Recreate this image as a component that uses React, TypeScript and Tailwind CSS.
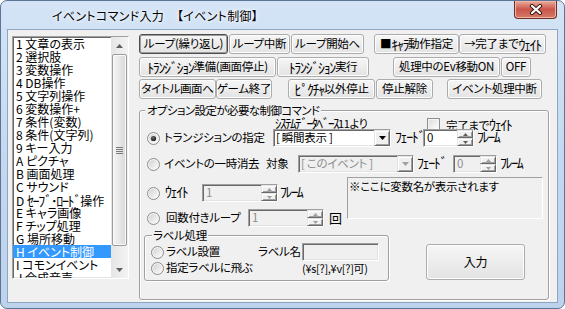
import React from "react";

const font =
  "font-['Noto_Sans_CJK_JP','Noto_Sans_CJK_SC',sans-serif] [font-feature-settings:'palt']";

function H({ children, small }: { children: React.ReactNode; small?: boolean }) {
  return (
    <span
      className={`${
        small ? "text-[13px] tracking-[-1.5px]" : "text-[14px] tracking-[-1.4px]"
      } leading-none [font-feature-settings:normal]`}
    >
      {children}
    </span>
  );
}

const sunken =
  "border border-t-[#a0a0a0] border-l-[#a0a0a0] border-b-white border-r-white shadow-[inset_1px_1px_0_#696969,inset_-1px_-1px_0_#e3e3e3]";
const raised =
  "border border-t-[#e3e3e3] border-l-[#e3e3e3] border-b-[#696969] border-r-[#696969] shadow-[inset_1px_1px_0_#ffffff,inset_-1px_-1px_0_#a0a0a0] bg-[#f0f0f0]";
const btn =
  "flex items-center justify-center whitespace-nowrap rounded-[3px] border bg-linear-to-b from-[#f6f6f6] to-[#e3e3e3] leading-none shrink-0";
const btnNormal = "border-[#acacac] shadow-[inset_0_0_0_1px_#fdfdfd]";
const btnDefault = "border-[#4d4d4d] shadow-[inset_0_0_0_1px_#9c9c9c]";

const items: React.ReactNode[] = [
  "1 文章の表示",
  "2 選択肢",
  "3 変数操作",
  "4 DB操作",
  "5 文字列操作",
  "6 変数操作+",
  "7 条件(変数)",
  "8 条件(文字列)",
  "9 キー入力",
  "A ピクチャ",
  "B 画面処理",
  "C サウンド",
  <>
    D <H>ｾｰﾌﾞ･ﾛｰﾄﾞ</H>操作
  </>,
  "E キャラ画像",
  "F チップ処理",
  "G 場所移動",
  "H イベント制御",
  "I コモンイベント",
  "J 合成音声",
];

function Radio({ checked, className = "" }: { checked?: boolean; className?: string }) {
  return (
    <svg width="13" height="13" viewBox="0 0 13 13" className={`shrink-0 ${className}`}>
      <defs>
        <linearGradient id="rg" x1="0" y1="0" x2="1" y2="1">
          <stop offset="0" stopColor="#d2d2d2" />
          <stop offset="1" stopColor="#fbfbfb" />
        </linearGradient>
        <radialGradient id="rd" cx="0.4" cy="0.35" r="0.7">
          <stop offset="0" stopColor="#6b6b6b" />
          <stop offset="1" stopColor="#141414" />
        </radialGradient>
      </defs>
      <circle cx="6.5" cy="6.5" r="6" fill="#f6f6f6" stroke="#8b8b8b" />
      <circle cx="6.5" cy="6.5" r="4.6" fill="url(#rg)" />
      {checked && <circle cx="6.5" cy="6.5" r="2.6" fill="url(#rd)" />}
    </svg>
  );
}

function Checkbox({ className = "" }: { className?: string }) {
  return (
    <div
      className={`shrink-0 w-[13px] h-[13px] border border-[#8e8f8f] bg-linear-to-br from-[#dcdcdc] to-white shadow-[inset_0_0_0_1px_#f4f4f4] ${className}`}
    />
  );
}

function DownArrow({ color = "#000" }: { color?: string }) {
  return (
    <svg width="7" height="4" viewBox="0 0 7 4">
      <path d="M0 0 H7 L3.5 4 Z" fill={color} />
    </svg>
  );
}

function Combo({
  w,
  text,
  disabled,
}: {
  w: string;
  text: string;
  disabled?: boolean;
}) {
  return (
    <div
      className={`${sunken} ${w} flex h-[18px] shrink-0 ${
        disabled ? "bg-[#f0f0f0] text-[#8d8d8d]" : "bg-white text-black"
      }`}
    >
      <div className="flex-1 pl-[2px] flex items-center whitespace-nowrap overflow-hidden leading-none">
        {text}
      </div>
      <div className={`${raised} w-[16px] h-full flex items-center justify-center`}>
        <DownArrow color={disabled ? "#a0a0a0" : "#000"} />
      </div>
    </div>
  );
}

function Spin({ w, val, disabled }: { w: string; val: string; disabled?: boolean }) {
  return (
    <div
      className={`${sunken} ${w} flex h-[18px] shrink-0 ${
        disabled ? "bg-[#f0f0f0] text-[#8d8d8d]" : "bg-white text-black"
      }`}
    >
      <div className="flex-1 pl-[3px] flex items-center leading-none">{val}</div>
      <div className="w-[16px] h-full flex flex-col">
        <div className={`${raised} flex-1 flex items-center justify-center`}>
          <svg width="5" height="3" viewBox="0 0 5 3">
            <path d="M0 3 H5 L2.5 0 Z" fill={disabled ? "#a0a0a0" : "#606060"} />
          </svg>
        </div>
        <div className={`${raised} flex-1 flex items-center justify-center`}>
          <svg width="5" height="3" viewBox="0 0 5 3">
            <path d="M0 0 H5 L2.5 3 Z" fill={disabled ? "#a0a0a0" : "#606060"} />
          </svg>
        </div>
      </div>
    </div>
  );
}

function Scrollbar() {
  return (
    <div className="w-[17px] h-full flex flex-col bg-linear-to-r from-[#e5e5e5] to-[#f3f3f3] shrink-0">
      <div className="h-[17px] flex items-center justify-center">
        <svg width="7" height="4" viewBox="0 0 7 4">
          <path d="M0 4 H7 L3.5 0 Z" fill="#5f5f5f" />
        </svg>
      </div>
      <div className="flex-1 px-[1px]">
        <div className="h-[192px] rounded-[2px] border border-[#9b9b9b] bg-linear-to-r from-[#f5f5f5] to-[#d9d9d9] shadow-[inset_0_0_0_1px_#fbfbfb] flex flex-col items-center justify-center gap-[1px]">
          <div className="w-[7px] h-[1px] bg-[#7a7a7a]" />
          <div className="w-[7px] h-[1px] bg-[#7a7a7a]" />
          <div className="w-[7px] h-[1px] bg-[#7a7a7a]" />
          <div className="w-[7px] h-[1px] bg-[#7a7a7a]" />
        </div>
      </div>
      <div className="h-[17px] flex items-center justify-center">
        <DownArrow color="#5f5f5f" />
      </div>
    </div>
  );
}

function Sp({ w }: { w: string }) {
  return <div className={`${w} shrink-0`} />;
}

export default function App() {
  return (
    <div className={`w-[565px] h-[309px] bg-white ${font} text-[11.5px] text-black`}>
      <div className="w-[565px] h-[309px] rounded-[7px] border border-[#5d7595] bg-linear-to-b from-[#d4e4f6] via-[#c4d9f0] to-[#bdd3eb] flex flex-col">
        {/* title bar */}
        <div className="h-[29px] flex shrink-0">
          <div className="ml-[51px] mt-[8px] h-[14px] text-[12px] leading-[14px] tracking-[0.3px] whitespace-nowrap [text-shadow:0_0_6px_#ffffff,0_0_3px_#ffffff]">
            イベントコマンド入力
            <span className="ml-[13px]">【イベント制御】</span>
          </div>
          <div className="ml-auto mr-[7px] w-[43px] h-[18px] rounded-b-[4px] border border-t-0 border-[#6e2d24] bg-linear-to-b from-[#e9ab9b] via-[#c9564a] to-[#d47a67] shadow-[inset_0_0_0_1px_#f0b6a8] flex items-center justify-center">
            <svg width="14" height="11" viewBox="0 0 14 11">
              <path d="M3 2 L11 9 M11 2 L3 9" stroke="#3b1a15" strokeWidth="4.2" strokeLinecap="round" />
              <path d="M3 2 L11 9 M11 2 L3 9" stroke="#ffffff" strokeWidth="2.2" strokeLinecap="round" />
            </svg>
          </div>
        </div>

        {/* client */}
        <div className="mx-[7px] w-[549px] h-[272px] bg-[#f0f0f0] shadow-[0_0_0_1px_#8ea6c4] flex shrink-0">
          {/* list box */}
          <div className={`${sunken} ml-[4px] mt-[6px] w-[117px] h-[243px] bg-white flex shrink-0 text-[12px]`}>
            <div className="flex-1 overflow-hidden">
              {items.map((it, i) => (
                <div
                  key={i}
                  className={`h-[13px] leading-[13px] pl-[3px] whitespace-nowrap ${
                    i === 16 ? "bg-[#3399ff] text-white" : ""
                  }`}
                >
                  {it}
                </div>
              ))}
            </div>
            <Scrollbar />
          </div>

          {/* right column */}
          <div className="ml-[10px] mt-[4px] flex flex-col tracking-[-0.3px]">
            <div className="flex h-[20px]">
              <div className={`${btn} ${btnDefault} w-[89px] h-[20px]`}>ループ(繰り返し)</div>
              <div className={`${btn} ${btnNormal} ml-[1px] w-[61px] h-[20px]`}>ループ中断</div>
              <div className={`${btn} ${btnNormal} ml-[1px] w-[73px] h-[20px]`}>ループ開始へ</div>
              <div className={`${btn} ${btnNormal} ml-[10px] w-[85px] h-[20px]`}>
                ■<H>ｷｬﾗ</H>動作指定
              </div>
              <div className={`${btn} ${btnNormal} w-[87px] h-[20px]`}>
                →完了まで<H>ｳｪｲﾄ</H>
              </div>
            </div>
            <div className="flex h-[20px] mt-[3px]">
              <div className={`${btn} ${btnNormal} w-[137px] h-[20px]`}>
                <H>ﾄﾗﾝｼﾞｼｮﾝ</H>準備(画面停止)
              </div>
              <div className={`${btn} ${btnNormal} ml-[1px] w-[92px] h-[20px]`}>
                <H>ﾄﾗﾝｼﾞｼｮﾝ</H>実行
              </div>
              <div className={`${btn} ${btnNormal} ml-[24px] w-[107px] h-[20px]`}>処理中のEv移動ON</div>
              <div className={`${btn} ${btnNormal} ml-[1px] w-[30px] h-[20px]`}>OFF</div>
            </div>
            <div className="flex h-[20px] mt-[2px]">
              <div className={`${btn} ${btnNormal} w-[77px] h-[20px]`}>タイトル画面へ</div>
              <div className={`${btn} ${btnNormal} w-[56px] h-[20px]`}>ゲーム終了</div>
              <div className={`${btn} ${btnNormal} ml-[16px] w-[87px] h-[20px]`}>
                <H>ﾋﾟｸﾁｬ</H>以外停止
              </div>
              <div className={`${btn} ${btnNormal} ml-[1px] w-[57px] h-[20px]`}>停止解除</div>
              <div className={`${btn} ${btnNormal} ml-[14px] w-[95px] h-[20px]`}>イベント処理中断</div>
            </div>

            {/* option group */}
            <fieldset className="mt-[5px] w-[410px] h-[196px] border border-[#a0a0a0] rounded-[3px] shadow-[inset_1px_1px_0_#ffffff,1px_1px_0_#ffffff]">
              <legend className="ml-[5px] px-[2px] leading-[13px] bg-[#f0f0f0] tracking-[-0.6px]">
                オプション設定が必要な制御コマンド
              </legend>
              <div className="flex flex-col w-[408px]">
                <div className="flex h-[12px] items-start">
                  <Sp w="w-[135px]" />
                  <div className="w-[152px] h-[12px] shrink-0 text-[11px] leading-[12px] whitespace-nowrap flex items-end">
                    <H small>ｼｽﾃﾑﾃﾞｰﾀﾍﾞｰｽ</H>
                    <span>11より</span>
                  </div>
                  <Checkbox className="mt-[1px]" />
                  <Sp w="w-[6px]" />
                  <div className="leading-[14px] whitespace-nowrap shrink-0">
                    完了まで<H>ｳｪｲﾄ</H>
                  </div>
                </div>
                <div className="flex h-[18px] items-center">
                  <Radio checked className="ml-[7px]" />
                  <div className="ml-[4px] w-[109px] shrink-0 whitespace-nowrap">トランジションの指定</div>
                  <Combo w="w-[118px]" text="[ 瞬間表示 ]" />
                  <div className="ml-[4px] w-[28px] shrink-0 whitespace-nowrap"><H>ﾌｪｰﾄﾞ</H></div>
                  <Spin w="w-[51px]" val="0" />
                  <div className="ml-[3px] shrink-0 whitespace-nowrap"><H>ﾌﾚｰﾑ</H></div>
                </div>
                <div className="mt-[8px] flex h-[18px] items-center">
                  <Radio className="ml-[7px]" />
                  <div className="ml-[4px] w-[102px] shrink-0 whitespace-nowrap">イベントの一時消去</div>
                  <div className="w-[32px] shrink-0 whitespace-nowrap">対象</div>
                  <Combo w="w-[116px]" text="[ このイベント ]" disabled />
                  <div className="ml-[3px] w-[36px] shrink-0 whitespace-nowrap"><H>ﾌｪｰﾄﾞ</H></div>
                  <Spin w="w-[44px]" val="0" disabled />
                  <div className="ml-[3px] shrink-0 whitespace-nowrap"><H>ﾌﾚｰﾑ</H></div>
                </div>
                <div className="mt-[4px] flex">
                  <div className="w-[207px] shrink-0 flex flex-col">
                    <div className="mt-[7px] flex h-[18px] items-center">
                      <Radio className="ml-[7px]" />
                      <div className="ml-[5px] w-[37px] shrink-0 whitespace-nowrap"><H>ｳｪｲﾄ</H></div>
                      <Spin w="w-[76px]" val="1" disabled />
                      <div className="ml-[2px] shrink-0 whitespace-nowrap"><H>ﾌﾚｰﾑ</H></div>
                    </div>
                    <div className="mt-[7px] flex h-[18px] items-center">
                      <Radio className="ml-[7px]" />
                      <div className="ml-[6px] w-[82px] shrink-0 whitespace-nowrap">回数付きループ</div>
                      <Spin w="w-[76px]" val="1" disabled />
                      <div className="ml-[5px] shrink-0 whitespace-nowrap text-[13px]">回</div>
                    </div>
                  </div>
                  <div className="w-[196px] h-[42px] shrink-0 border border-t-[#a0a0a0] border-l-[#a0a0a0] border-b-white border-r-white px-[1px] pt-[1px] leading-[14px] whitespace-nowrap">
                    ※ここに変数名が表示されます
                  </div>
                </div>
                <div className="mt-[2px] flex items-start">
                  <fieldset className="ml-[4px] w-[245px] h-[52px] shrink-0 border border-[#a0a0a0] rounded-[3px] shadow-[inset_1px_1px_0_#ffffff,1px_1px_0_#ffffff]">
                    <legend className="ml-[7px] px-[1px] leading-[13px] bg-[#f0f0f0]">ラベル処理</legend>
                    <div className="flex flex-col">
                      <div className="mt-[1px] flex h-[18px] items-center">
                        <Radio className="ml-[6px]" />
                        <div className="ml-[2px] w-[92px] shrink-0 whitespace-nowrap">ラベル設置</div>
                        <div className="w-[44px] shrink-0 whitespace-nowrap">ラベル名</div>
                        <div className={`${sunken} w-[77px] h-[18px] shrink-0 bg-[#f0f0f0]`} />
                      </div>
                      <div className="flex h-[14px] items-center">
                        <Radio className="ml-[6px]" />
                        <div className="ml-[2px] w-[136px] shrink-0 whitespace-nowrap">指定ラベルに飛ぶ</div>
                        <div className="shrink-0 whitespace-nowrap text-[11px]">(¥s[?],¥v[?]可)</div>
                      </div>
                    </div>
                  </fieldset>
                  <div className={`${btn} ${btnNormal} ml-[37px] mt-[15px] w-[99px] h-[36px] text-[12px]`}>入力</div>
                </div>
              </div>
            </fieldset>
          </div>
        </div>
      </div>
    </div>
  );
}
